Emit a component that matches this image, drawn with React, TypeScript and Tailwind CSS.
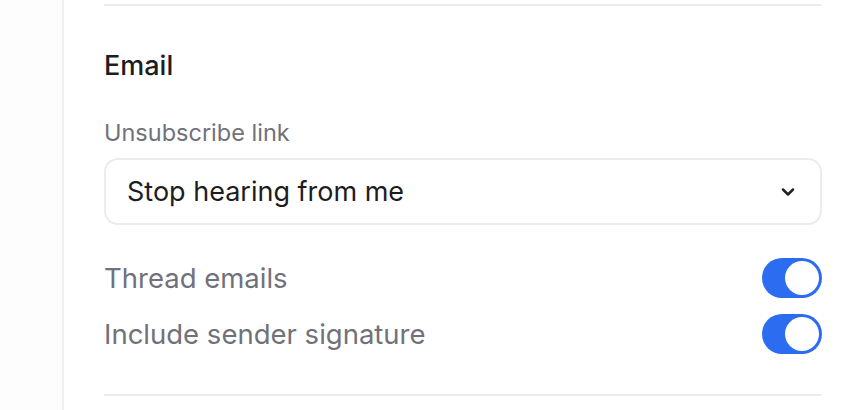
import { ChevronDown } from "lucide-react";
import { useState } from "react";

function Toggle({ on, onChange }: { on: boolean; onChange: (v: boolean) => void }) {
  return (
    <button
      type="button"
      onClick={() => onChange(!on)}
      className={`flex h-[40px] w-[60px] shrink-0 items-center rounded-full p-[3px] transition ${
        on ? "justify-end bg-[#2b6cf0]" : "justify-start bg-[#e4e4e7]"
      }`}
    >
      <span className="h-[34px] w-[34px] rounded-full bg-white" />
    </button>
  );
}

export default function App() {
  const [thread, setThread] = useState(true);
  const [signature, setSignature] = useState(true);

  return (
    <div
      className="flex min-h-[410px] bg-white text-[#1d1d1f]"
      style={{ fontFamily: "Inter, 'Noto Sans', sans-serif" }}
    >
      <aside className="w-[64px] shrink-0 border-r-2 border-[#f0f0f0] bg-[#fdfdfd]" />
      <main className="flex-1 pl-[40px] pr-[24px] pt-[4px]">
        <div className="h-[2px] bg-[#ececec]" />

        <section className="pt-[44px] pb-[40px]">
          <h2 className="text-[27px] leading-[32px] font-medium">Email</h2>

          <div className="mt-[37px]">
            <label className="block text-[23.5px] leading-[28px] text-[#71717a]">Unsubscribe link</label>
            <button
              type="button"
              className="mt-[11px] flex h-[67px] w-full items-center justify-between rounded-[14px] border-2 border-[#ececec] pl-[21px] pr-[22px]"
            >
              <span className="text-[27px] leading-[34px]">Stop hearing from me</span>
              <ChevronDown size={20} strokeWidth={3} className="text-[#222]" />
            </button>
          </div>

          <div className="mt-[33px] flex flex-col gap-[16px]">
            <div className="flex items-center justify-between">
              <span className="text-[27.5px] leading-[34px] text-[#71717a]">Thread emails</span>
              <Toggle on={thread} onChange={setThread} />
            </div>
            <div className="flex items-center justify-between">
              <span className="text-[27.5px] leading-[34px] text-[#71717a]">Include sender signature</span>
              <Toggle on={signature} onChange={setSignature} />
            </div>
          </div>
        </section>

        <div className="h-[2px] bg-[#ececec]" />
      </main>
    </div>
  );
}
